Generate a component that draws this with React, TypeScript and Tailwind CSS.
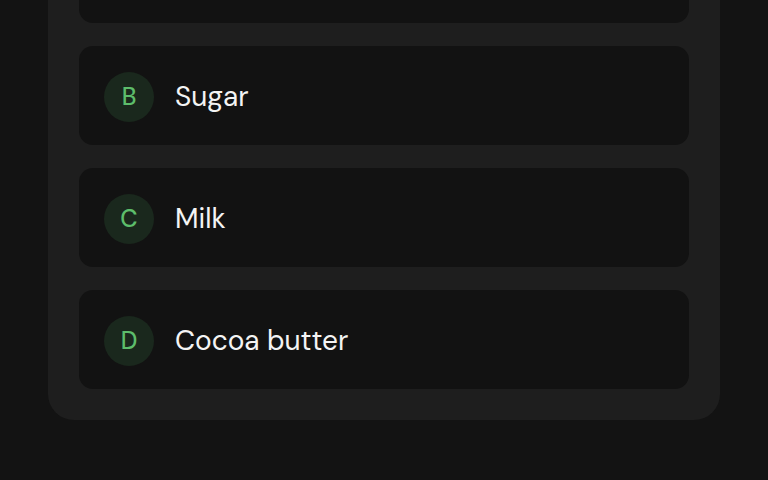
const options = [
  { letter: 'B', label: 'Sugar' },
  { letter: 'C', label: 'Milk' },
  { letter: 'D', label: 'Cocoa butter' },
]

function OptionRow({ letter, label }: { letter: string; label: string }) {
  return (
    <div className="flex h-[99px] items-center gap-[21px] rounded-[14px] bg-[#121212] pl-[25px] pt-[3px]">
      <div className="flex h-[50px] w-[50px] items-center justify-center rounded-full bg-[#1a281d] text-[24px] font-medium text-[#5dbd6b]">
        {letter}
      </div>
      <span className="text-[28px] text-[#f4f4f4]">{label}</span>
    </div>
  )
}

export default function App() {
  return (
    <div
      className="h-[480px] w-[768px] overflow-hidden bg-[#131313] px-12"
      style={{ fontFamily: '"DM Sans", Inter, "Noto Sans", sans-serif' }}
    >
      <div className="mt-[-107px] flex flex-col gap-[23px] rounded-[26px] bg-[#1e1e1e] p-[31px]">
        {/* previous option, scrolled out of view */}
        <div className="h-[99px] rounded-[14px] bg-[#121212]" />
        {options.map((o) => (
          <OptionRow key={o.letter} letter={o.letter} label={o.label} />
        ))}
      </div>
    </div>
  )
}
